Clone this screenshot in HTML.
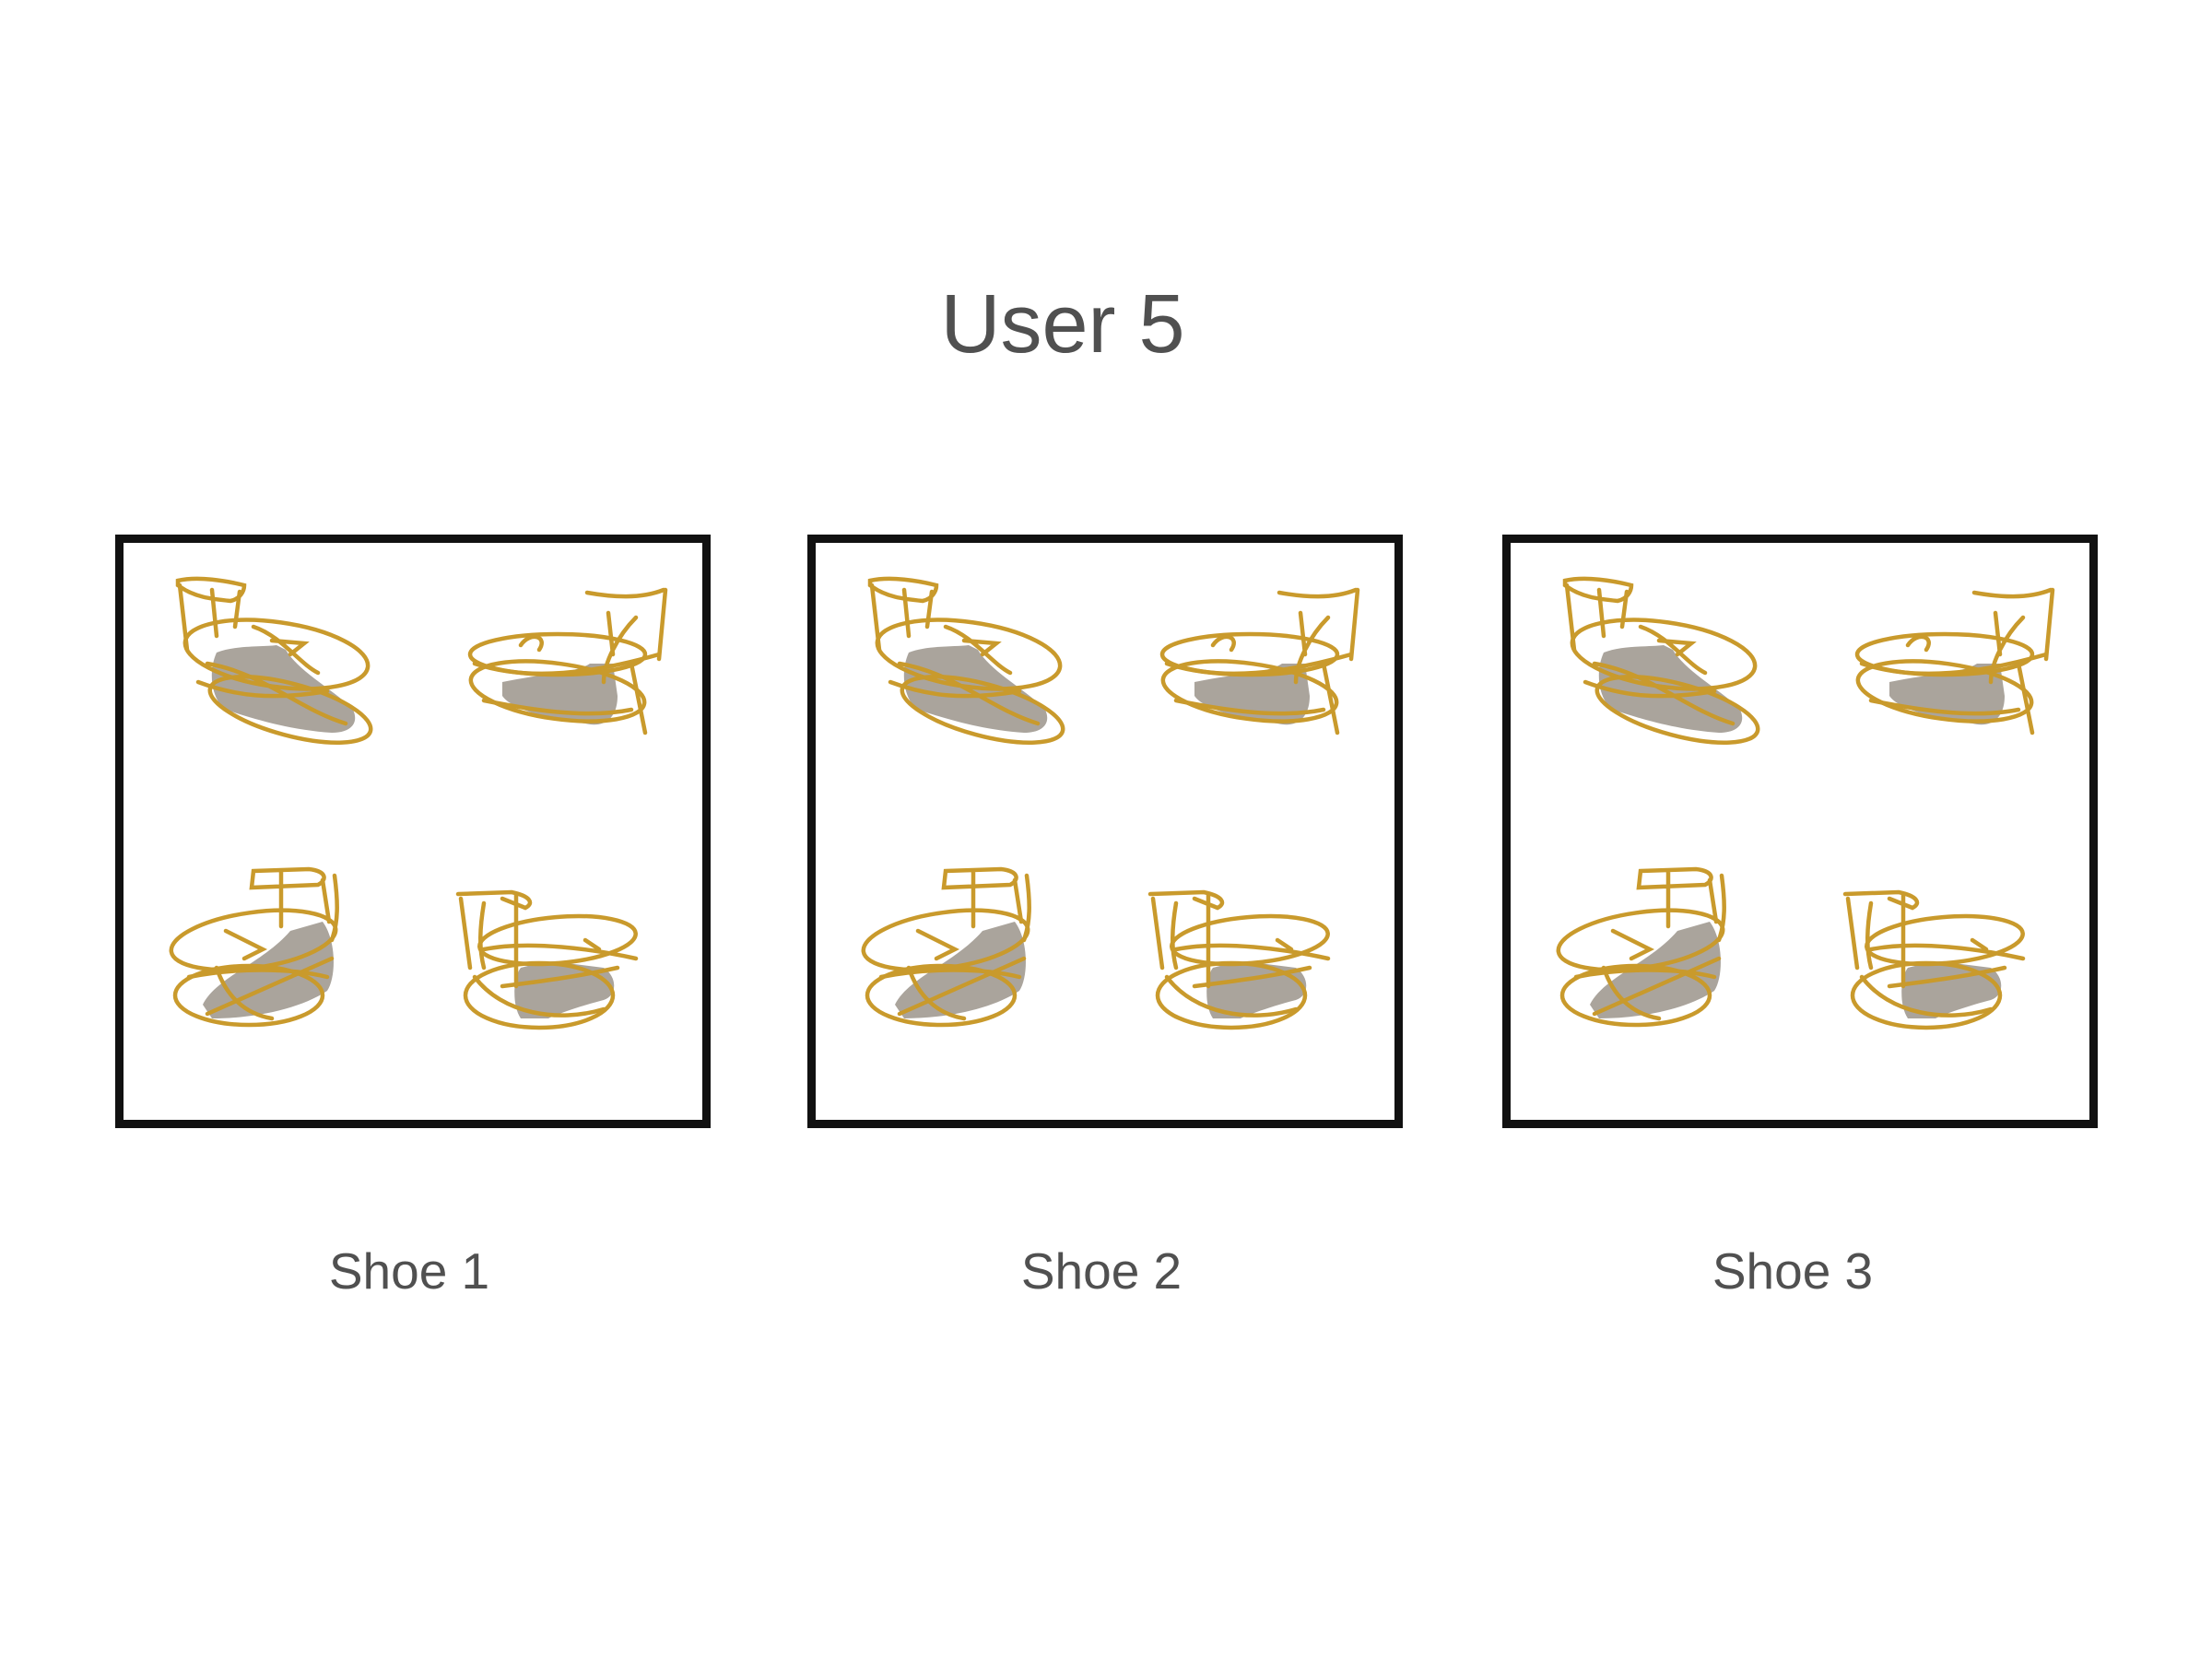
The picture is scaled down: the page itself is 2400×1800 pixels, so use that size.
<!DOCTYPE html>
<html><head><meta charset="utf-8"><style>
html,body{margin:0;padding:0;background:#fff;}
svg{display:block}
</style></head><body>
<svg width="2400" height="1800" viewBox="0 0 2400 1800" xmlns="http://www.w3.org/2000/svg">
<defs>
<g id="q">
<rect x="4.5" y="4.5" width="637" height="635" fill="#fff" stroke="#111" stroke-width="9"/>
<g fill="#aaa49c" stroke="none">
<path d="M110,128 C130,120 160,122 175,120 L185,125 C200,150 240,170 258,190 C265,205 255,215 235,215 C190,212 150,200 120,190 C105,180 100,150 110,128 Z"/>
<path d="M420,160 C470,150 500,150 515,140 L540,140 L545,175 C545,200 530,210 510,205 C470,200 430,190 420,175 Z"/>
<path d="M95,510 C110,480 160,465 190,430 L225,420 C240,440 240,480 230,495 C200,515 150,525 105,525 Z"/>
<path d="M440,470 C460,465 480,460 490,465 L530,470 C545,480 545,500 530,505 C510,510 480,520 470,525 L440,525 C430,510 432,480 440,470 Z"/>
</g>
<g fill="none" stroke="#c99a2c" stroke-width="4.5" stroke-linecap="round">
<path d="M68,50 C90,45 120,50 140,55 C140,62 135,70 125,72 C105,70 85,68 68,55 Z"/>
<path d="M70,55 L78,125 M105,60 L110,110 M135,62 L130,100"/>
<ellipse cx="175" cy="130" rx="100" ry="35" transform="rotate(8 175 130)"/>
<ellipse cx="190" cy="190" rx="90" ry="28" transform="rotate(15 190 190)"/>
<path d="M100,140 C160,150 200,190 250,205 M150,100 C180,110 200,140 220,150 M170,115 L205,118 L190,130 M90,160 C130,175 170,180 230,170"/>
<path d="M512,63 C540,68 570,70 595,60 M597,60 L590,135 M565,90 C545,110 530,140 530,160 M535,85 L540,130"/>
<ellipse cx="480" cy="130" rx="95" ry="22"/>
<ellipse cx="480" cy="170" rx="95" ry="30" transform="rotate(8 480 170)"/>
<path d="M390,140 C450,160 520,150 590,130 M440,120 C450,105 470,110 460,125 M560,140 L575,215 M400,180 C450,190 510,200 560,190"/>
<path d="M150,365 L210,363 C230,365 230,375 220,380 L148,383 Z M180,365 L180,425 M238,370 C242,400 242,420 235,440 M225,375 L232,420"/>
<ellipse cx="150" cy="440" rx="90" ry="30" transform="rotate(-8 150 440)"/>
<ellipse cx="145" cy="500" rx="80" ry="32"/>
<path d="M100,520 L235,460 M120,430 L160,450 L140,460 M110,470 C120,500 140,520 170,525 M80,480 C130,470 190,470 230,480"/>
<path d="M372,390 L430,388 C450,392 455,400 445,405 L420,395 M435,390 L435,490 M375,395 L385,470 M400,400 C395,430 395,450 400,470"/>
<ellipse cx="480" cy="440" rx="85" ry="25" transform="rotate(-5 480 440)"/>
<ellipse cx="460" cy="500" rx="80" ry="35"/>
<path d="M400,450 C450,440 520,450 565,460 M420,490 C460,485 500,480 545,470 M510,440 L525,450 M390,480 C420,520 480,530 530,515"/>
</g>
</g>
</defs>
<text x="1153" y="382" text-anchor="middle" font-family="Liberation Sans, Arial, sans-serif" font-size="90" fill="#505050">User 5</text>
<use href="#q" transform="translate(125,580)"/>
<use href="#q" transform="translate(876,580)"/>
<use href="#q" transform="translate(1630,580)"/>
<g font-family="Liberation Sans, Arial, sans-serif" font-size="55" fill="#505050" text-anchor="middle">
<text x="444" y="1398">Shoe 1</text>
<text x="1195" y="1398">Shoe 2</text>
<text x="1945" y="1398">Shoe 3</text>
</g>
</svg>
</body></html>
